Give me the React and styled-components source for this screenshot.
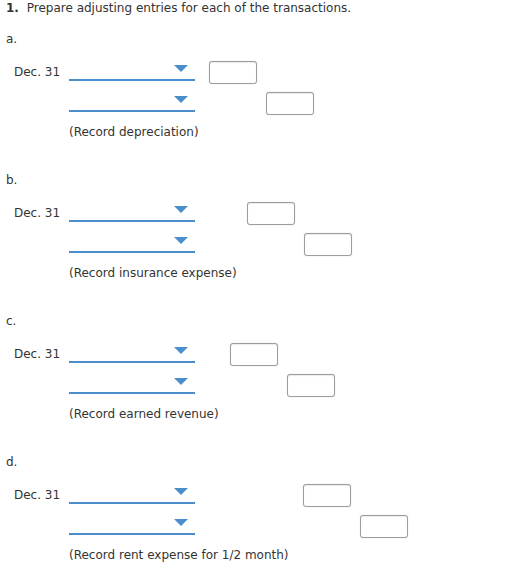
import React from "react";
import styled, { createGlobalStyle } from "styled-components";

const GlobalStyle = createGlobalStyle`
    body {
        margin: 0;
        background: #fff;
        font-family: "DejaVu Sans", Verdana, sans-serif;
        font-size: 12px;
        color: #333;
    }
`;

const Page = styled.div`
    padding: 1px 6px 0;
`;

const Title = styled.div`
    line-height: 15px;
    margin-bottom: 16px;

    b {
        font-weight: bold;
        margin-right: 4px;
    }
`;

const Section = styled.div`
    margin-bottom: 33px;
`;

const Label = styled.div`
    line-height: 15px;
    margin-bottom: 14px;
`;

const Entries = styled.div`
    display: grid;
    grid-template-columns: 55px 126px ${(props) => props.offset}px 57px 48px;
    grid-template-rows: 23px 23px auto;
    row-gap: 8px;
    padding-left: 8px;
`;

const DateCell = styled.div`
    line-height: 23px;
    grid-column: 1;
`;

const Select = styled.div`
    grid-column: 2;
    height: 20px;
    border-bottom: 2px solid #4a8fcb;
    display: flex;
    justify-content: flex-end;
    align-items: flex-start;
    padding: 4px 7px 0 0;
    box-sizing: border-box;
    height: 20px;
`;

const Caret = styled.span`
    width: 0;
    height: 0;
    border-left: 7px solid transparent;
    border-right: 7px solid transparent;
    border-top: 7px solid #4a8fcb;
`;

const Amount = styled.div`
    grid-column: ${(props) => (props.credit ? 5 : 4)};
    width: 48px;
    height: 23px;
    box-sizing: border-box;
    border: 1px solid #9d9d9d;
    border-radius: 3px;
    box-shadow: inset 0 1px 1px rgba(0, 0, 0, 0.08), 0 0 1px rgba(0, 0, 0, 0.25);
    background: #fff;
`;

const Note = styled.div`
    grid-column: 2 / 6;
    line-height: 15px;
    margin-top: 2px;
`;

const sections = [
    { label: "a.", offset: 14, note: "(Record depreciation)" },
    { label: "b.", offset: 52, note: "(Record insurance expense)" },
    { label: "c.", offset: 35, note: "(Record earned revenue)" },
    { label: "d.", offset: 108, note: "(Record rent expense for 1/2 month)" },
];

function Entry({ label, offset, note }) {
    return (
        <Section>
            <Label>{label}</Label>
            <Entries offset={offset}>
                <DateCell>Dec. 31</DateCell>
                <Select>
                    <Caret />
                </Select>
                <Amount />
                <Select>
                    <Caret />
                </Select>
                <Amount credit />
                <Note>{note}</Note>
            </Entries>
        </Section>
    );
}

export default function App() {
    return (
        <Page>
            <GlobalStyle />
            <Title>
                <b>1.</b> Prepare adjusting entries for each of the transactions.
            </Title>
            {sections.map((s) => (
                <Entry key={s.label} {...s} />
            ))}
        </Page>
    );
}
